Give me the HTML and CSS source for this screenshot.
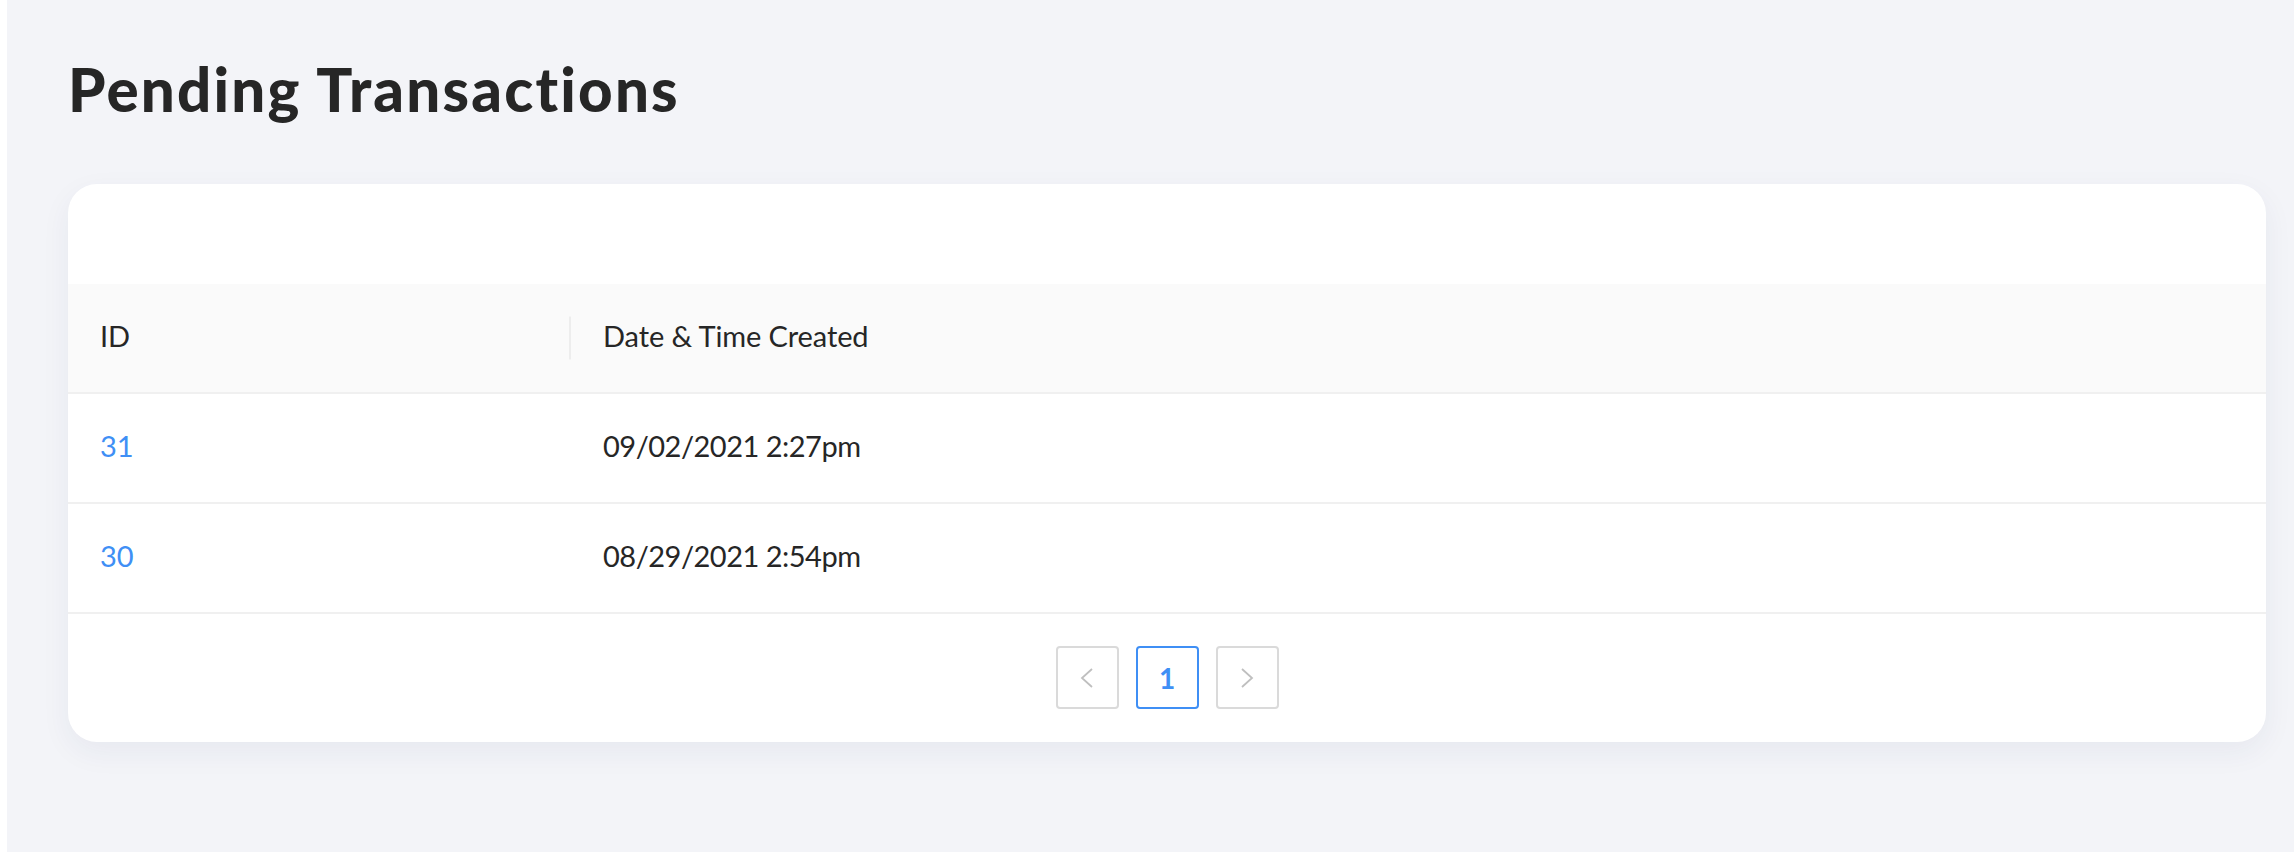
FILE: index.html
```html
<!DOCTYPE html>
<html lang="en">
<head>
<meta charset="utf-8">
<title>Pending Transactions</title>
<link rel="stylesheet" href="styles.css">
</head>
<body>
<div class="app">
  <aside class="rail"></aside>
  <main class="main">
    <h1 class="page-title">Pending Transactions</h1>
    <section class="card">
      <div class="card-toolbar"></div>
      <table class="table">
        <thead>
          <tr>
            <th class="col-id">ID</th>
            <th class="col-date">Date &amp; Time Created</th>
          </tr>
        </thead>
        <tbody>
          <tr>
            <td class="col-id"><a class="link" href="#">31</a></td>
            <td class="col-date">09/02/2021 2:27pm</td>
          </tr>
          <tr>
            <td class="col-id"><a class="link" href="#">30</a></td>
            <td class="col-date">08/29/2021 2:54pm</td>
          </tr>
        </tbody>
      </table>
      <nav class="pagination">
        <button class="page-btn disabled" aria-label="Previous page">
          <svg width="14" height="20" viewBox="0 0 14 20"><polyline points="12,1 2,10 12,19" fill="none" stroke="#bfbfbf" stroke-width="1.8"/></svg>
        </button>
        <button class="page-btn active">1</button>
        <button class="page-btn disabled" aria-label="Next page">
          <svg width="14" height="20" viewBox="0 0 14 20"><polyline points="2,1 12,10 2,19" fill="none" stroke="#bfbfbf" stroke-width="1.8"/></svg>
        </button>
      </nav>
    </section>
  </main>
</div>
</body>
</html>
```
FILE: styles.css
```css
* { box-sizing: border-box; }
html, body { margin: 0; padding: 0; }
body {
  font-family: "Lato", "Nunito Sans", "Open Sans", sans-serif;
  color: #262626;
  background: #ffffff;
}
.app {
  display: flex;
  min-height: 852px;
}
.rail {
  width: 7px;
  flex: 0 0 7px;
  background: #ffffff;
}
.main {
  flex: 1;
  background: #f3f4f8;
  padding: 53px 28px 0 61px;
}
.page-title {
  margin: 0 0 59px 0;
  font-family: "Lato", sans-serif;
  font-weight: 900;
  font-size: 60px;
  line-height: 72px;
  letter-spacing: 2.2px;
  color: #262626;
}
.card {
  background: #ffffff;
  border-radius: 29px;
  box-shadow: 0 10px 30px rgba(40, 50, 100, 0.06);
  overflow: hidden;
}
.card-toolbar {
  height: 100px;
}
.table {
  width: 100%;
  border-collapse: collapse;
  font-size: 29px;
  letter-spacing: -0.1px;
}
.table th,
.table td {
  text-align: left;
  padding: 0 32px 5px;
  vertical-align: middle;
  border-bottom: 2px solid #f0f0f0;
}
.table th {
  height: 109px;
  background: #fafafa;
  font-weight: 400;
  color: #262626;
  position: relative;
}
.table td {
  height: 110px;
  color: #262626;
  letter-spacing: -0.5px;
}
.col-id { width: 503px; }
.table th.col-id::after {
  content: "";
  position: absolute;
  right: 0;
  top: 50%;
  width: 2px;
  height: 43px;
  transform: translateY(-50%);
  background: #ededed;
}
.link {
  color: #3f8ff5;
  text-decoration: none;
  letter-spacing: 0;
}
.pagination {
  display: flex;
  justify-content: center;
  gap: 17px;
  padding: 32px 0 33px;
}
.page-btn {
  width: 63px;
  height: 63px;
  border: 2px solid #dadada;
  border-radius: 4px;
  background: #ffffff;
  display: flex;
  align-items: center;
  justify-content: center;
  padding: 0;
  font-family: "Lato", sans-serif;
  font-size: 28px;
  font-weight: 700;
  color: #3f8ff5;
}
.page-btn.active {
  border-color: #3f8ff5;
}
```
